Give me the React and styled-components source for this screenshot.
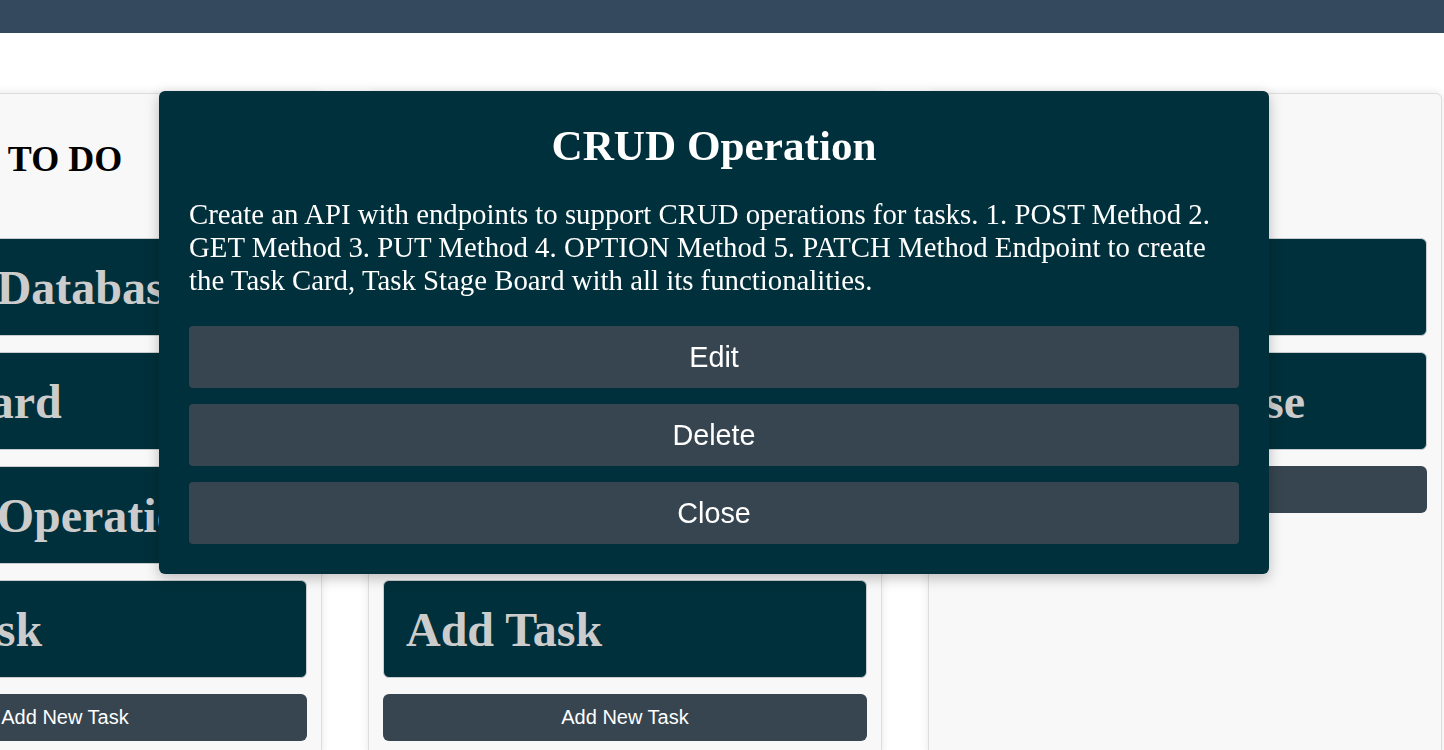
import React from 'react';
import styled, { createGlobalStyle } from 'styled-components';

const GlobalStyle = createGlobalStyle`
  html, body {
    margin: 0;
    padding: 0;
    overflow: hidden;
    background: #ffffff;
  }
  body {
    font-family: "Liberation Serif", "Times New Roman", serif;
  }
`;

const TopBar = styled.header`
  height: 33px;
  background: #34495e;
`;

const Board = styled.main`
  display: flex;
  justify-content: flex-end;
  gap: 46px;
  padding: 60px 2px 0 0;
`;

const Column = styled.section`
  flex: 0 0 514px;
  box-sizing: border-box;
  background: #f8f8f8;
  border: 1px solid #dddddd;
  border-radius: 6px;
  box-shadow: 0 0 10px rgba(0, 0, 0, 0.1);
  padding: 14px;
  display: flex;
  flex-direction: column;
  gap: 16px;
`;

const ColumnTitle = styled.h2`
  margin: 30px 0 42px;
  font-size: 36px;
  font-weight: bold;
  line-height: normal;
  text-align: center;
  color: #000;
`;

const Card = styled.div`
  box-sizing: border-box;
  height: 98px;
  display: flex;
  align-items: center;
  padding: 0 22px;
  background: #00303b;
  border: 1px solid #c9cfd1;
  border-radius: 6px;
  color: #cccccc;
  font-size: 48px;
  font-weight: bold;
  white-space: nowrap;
  overflow: hidden;
`;

const AddButton = styled.button`
  height: 47px;
  border: none;
  border-radius: 6px;
  background: #36454f;
  color: #ffffff;
  font-family: "Liberation Sans", Arial, sans-serif;
  font-size: 20px;
  cursor: pointer;
`;

const Modal = styled.div`
  position: fixed;
  top: 91px;
  left: 159px;
  width: 1110px;
  box-sizing: border-box;
  padding: 30px 30px 30px;
  background: #00303b;
  border-radius: 6px;
  box-shadow: 0 4px 14px rgba(0, 0, 0, 0.25);
  color: #ffffff;
`;

const ModalTitle = styled.h1`
  margin: 0 0 28px;
  font-size: 43.2px;
  font-weight: bold;
  line-height: normal;
  text-align: center;
`;

const ModalText = styled.p`
  margin: 0 0 29px;
  font-size: 28.8px;
  line-height: normal;
`;

const ModalActions = styled.div`
  display: flex;
  flex-direction: column;
  gap: 16px;
`;

const ModalButton = styled.button`
  height: 62px;
  border: none;
  border-radius: 4px;
  background: #36454f;
  color: #ffffff;
  font-family: "Liberation Sans", Arial, sans-serif;
  font-size: 28.8px;
  cursor: pointer;
`;

const columns = [
  { title: 'TO DO', cards: ['Design Database', 'Task Card', 'CRUD Operation', 'Add Task'] },
  { title: 'IN PROGRESS', cards: ['Setup Server', 'Task Stage Board', 'Design UI', 'Add Task'] },
  { title: 'DONE', cards: ['Project Setup', 'Create Database'] },
];

export default function App() {
  return (
    <>
      <GlobalStyle />
      <TopBar />
      <Board>
        {columns.map((col) => (
          <Column key={col.title}>
            <ColumnTitle>{col.title}</ColumnTitle>
            {col.cards.map((c, i) => (
              <Card key={i}>{c}</Card>
            ))}
            <AddButton>Add New Task</AddButton>
          </Column>
        ))}
      </Board>
      <Modal>
        <ModalTitle>CRUD Operation</ModalTitle>
        <ModalText>
          Create an API with endpoints to support CRUD operations for tasks. 1. POST Method 2. GET Method 3. PUT Method 4. OPTION Method 5. PATCH Method Endpoint to create the Task Card, Task Stage Board with all its functionalities.
        </ModalText>
        <ModalActions>
          <ModalButton>Edit</ModalButton>
          <ModalButton>Delete</ModalButton>
          <ModalButton>Close</ModalButton>
        </ModalActions>
      </Modal>
    </>
  );
}
